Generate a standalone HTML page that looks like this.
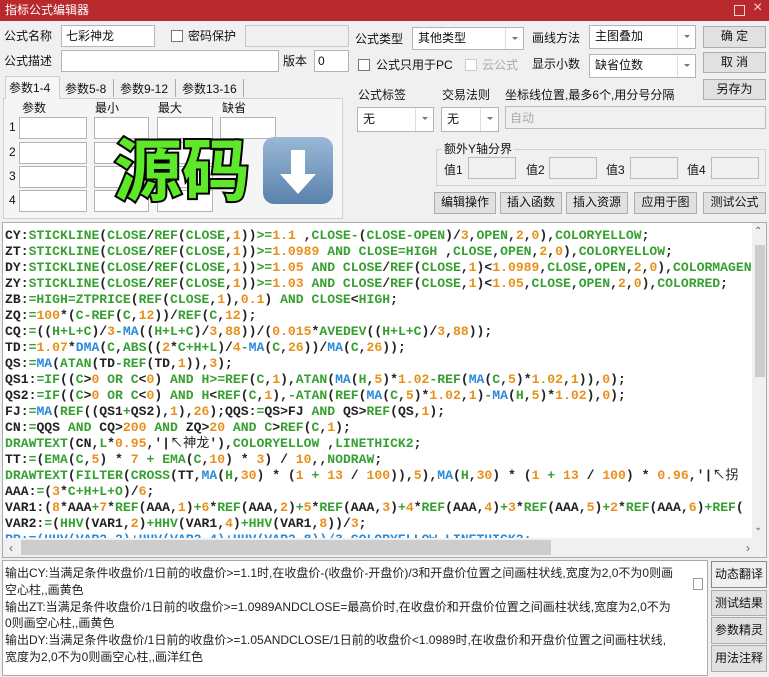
<!DOCTYPE html>
<html><head><meta charset="utf-8"><style>
*{box-sizing:border-box;margin:0;padding:0}
body{width:769px;height:677px;overflow:hidden;background:#f0f0f0;font-family:"Liberation Sans","Noto Sans CJK SC",sans-serif;font-size:12px;color:#111;position:relative}
.a{position:absolute}
.t{position:absolute;white-space:nowrap;line-height:14px}
.in{position:absolute;background:#fff;border:1px solid #b4b4b4}
.gr{position:absolute;background:#f0f0f0;border:1px solid #c8c8c8}
.btn{position:absolute;background:#e1e1e1;border:1px solid #adadad;text-align:center;line-height:19px;font-size:12px}
.sel{position:absolute;background:#fff;border:1px solid #b4b4b4;padding-left:5px;line-height:20px}
.sel:after{content:"";position:absolute;right:0;top:0;bottom:0;width:17px;border-left:1px solid #ddd}
.sel i{position:absolute;right:5px;top:9px;width:0;height:0;border-left:3px solid transparent;border-right:3px solid transparent;border-top:3px solid #777}
.cb{position:absolute;width:12px;height:12px;background:#fff;border:1px solid #555}
.code{position:absolute;left:4px;top:228px;font-family:"Liberation Mono","Noto Sans CJK SC",monospace;font-weight:bold;font-size:13.1px;line-height:16px;white-space:pre;color:#222}
.g{color:#36a030}.o{color:#e8901c}.b{color:#2a8ad8}
.bt{position:absolute;font-size:12px;line-height:16.8px;color:#222;left:5px;top:565px;white-space:nowrap}
</style></head><body>
<div class="a" style="left:0;top:0;width:769px;height:21px;background:#b8292e"></div>
<div class="t" style="left:5px;top:3px;color:#fff;font-size:12px">指标公式编辑器</div>
<div class="a" style="left:734px;top:5px;width:11px;height:11px;border:1px solid #f4d0d0"></div>
<div class="t" style="left:753px;top:1px;color:#f4d0d0;font-size:16px">×</div>

<div class="t" style="left:4px;top:29px">公式名称</div>
<div class="in" style="left:61px;top:25px;width:94px;height:22px"></div>
<div class="t" style="left:66px;top:29px">七彩神龙</div>
<div class="cb" style="left:171px;top:30px;border-color:#777"></div>
<div class="t" style="left:188px;top:29px">密码保护</div>
<div class="gr" style="left:245px;top:25px;width:104px;height:22px"></div>
<div class="t" style="left:4px;top:54px">公式描述</div>
<div class="in" style="left:61px;top:50px;width:218px;height:22px"></div>
<div class="t" style="left:283px;top:54px">版本</div>
<div class="in" style="left:314px;top:50px;width:35px;height:22px"></div>
<div class="t" style="left:318px;top:54px">0</div>

<div class="a" style="left:3px;top:98px;width:340px;height:121px;border:1px solid #d0d0d0;background:#f5f5f5"></div>
<div class="a" style="left:5px;top:76px;width:55px;height:23px;background:#f5f5f5;border:1px solid #d0d0d0;border-bottom:none"></div>
<div class="t" style="left:9px;top:81px">参数1-4</div>
<div class="t" style="left:65px;top:82px">参数5-8</div>
<div class="t" style="left:120px;top:82px">参数9-12</div>
<div class="t" style="left:182px;top:82px">参数13-16</div>
<div class="a" style="left:113px;top:79px;width:1px;height:18px;background:#aaa"></div>
<div class="a" style="left:175px;top:79px;width:1px;height:18px;background:#aaa"></div>
<div class="a" style="left:243px;top:79px;width:1px;height:18px;background:#aaa"></div>
<div class="t" style="left:22px;top:101px">参数</div>
<div class="t" style="left:95px;top:101px">最小</div>
<div class="t" style="left:158px;top:101px">最大</div>
<div class="t" style="left:222px;top:101px">缺省</div>
<div class="t" style="left:9px;top:120px">1</div><div class="t" style="left:9px;top:145px">2</div><div class="t" style="left:9px;top:169px">3</div><div class="t" style="left:9px;top:193px">4</div>
<div class="in" style="left:19px;top:117px;width:68px;height:22px"></div><div class="in" style="left:94px;top:117px;width:55px;height:22px"></div><div class="in" style="left:157px;top:117px;width:56px;height:22px"></div><div class="in" style="left:220px;top:117px;width:56px;height:22px"></div>
<div class="in" style="left:19px;top:142px;width:68px;height:22px"></div><div class="in" style="left:94px;top:142px;width:55px;height:22px"></div><div class="in" style="left:157px;top:142px;width:56px;height:22px"></div>
<div class="in" style="left:19px;top:166px;width:68px;height:22px"></div><div class="in" style="left:94px;top:166px;width:55px;height:22px"></div><div class="in" style="left:157px;top:166px;width:56px;height:22px"></div>
<div class="in" style="left:19px;top:190px;width:68px;height:22px"></div><div class="in" style="left:94px;top:190px;width:55px;height:22px"></div><div class="in" style="left:157px;top:190px;width:56px;height:22px"></div>

<div class="t" style="left:114px;top:126px;font-size:68px;line-height:80px;font-weight:bold;color:#5ee82a;-webkit-text-stroke:4px #000;paint-order:stroke fill;font-family:'Noto Sans CJK SC',sans-serif">源码</div>
<div class="a" style="left:263px;top:137px;width:70px;height:67px;border-radius:11px;background:linear-gradient(#9ab8d6,#5a82ad)"></div>
<svg class="a" style="left:263px;top:137px" width="70" height="67"><path d="M28 13h14v24h11L35 57 17 37h11z" fill="#fff"/></svg>

<div class="t" style="left:355px;top:32px">公式类型</div>
<div class="sel" style="left:412px;top:27px;width:112px;height:23px">其他类型<i></i></div>
<div class="t" style="left:532px;top:31px">画线方法</div>
<div class="sel" style="left:589px;top:25px;width:107px;height:24px">主图叠加<i></i></div>
<div class="btn" style="left:703px;top:26px;width:63px;height:22px">确 定</div>
<div class="btn" style="left:703px;top:52px;width:63px;height:21px">取 消</div>
<div class="btn" style="left:703px;top:79px;width:63px;height:21px">另存为</div>
<div class="cb" style="left:358px;top:59px;border-color:#777"></div>
<div class="t" style="left:376px;top:58px">公式只用于PC</div>
<div class="cb" style="left:465px;top:59px;border-color:#ccc"></div>
<div class="t" style="left:482px;top:58px;color:#aaa">云公式</div>
<div class="t" style="left:532px;top:57px">显示小数</div>
<div class="sel" style="left:589px;top:54px;width:107px;height:24px">缺省位数<i></i></div>
<div class="t" style="left:358px;top:88px">公式标签</div>
<div class="t" style="left:442px;top:88px">交易法则</div>
<div class="t" style="left:505px;top:88px">坐标线位置,最多6个,用分号分隔</div>
<div class="sel" style="left:357px;top:107px;width:77px;height:25px;line-height:23px">无<i></i></div>
<div class="sel" style="left:441px;top:107px;width:58px;height:25px;line-height:23px">无<i></i></div>
<div class="gr" style="left:505px;top:106px;width:261px;height:23px;border-color:#bbb"></div>
<div class="t" style="left:510px;top:111px;color:#aaa">自动</div>
<div class="a" style="left:436px;top:149px;width:330px;height:37px;border:1px solid #d0d0d0"></div>
<div class="t" style="left:442px;top:142px;background:#f0f0f0;padding:0 2px">额外Y轴分界</div>
<div class="t" style="left:444px;top:163px">值1</div><div class="gr" style="left:468px;top:157px;width:48px;height:22px;border-color:#bbb"></div>
<div class="t" style="left:526px;top:163px">值2</div><div class="gr" style="left:549px;top:157px;width:48px;height:22px;border-color:#bbb"></div>
<div class="t" style="left:606px;top:163px">值3</div><div class="gr" style="left:630px;top:157px;width:48px;height:22px;border-color:#bbb"></div>
<div class="t" style="left:687px;top:163px">值4</div><div class="gr" style="left:711px;top:157px;width:48px;height:22px;border-color:#bbb"></div>
<div class="btn" style="left:434px;top:192px;width:62px;height:22px">编辑操作</div>
<div class="btn" style="left:500px;top:192px;width:62px;height:22px">插入函数</div>
<div class="btn" style="left:566px;top:192px;width:62px;height:22px">插入资源</div>
<div class="btn" style="left:634px;top:192px;width:63px;height:22px">应用于图</div>
<div class="btn" style="left:703px;top:192px;width:63px;height:22px">测试公式</div>

<div class="a" style="left:2px;top:222px;width:765px;height:336px;background:#fff;border:1px solid #aaa;overflow:hidden">
<div class="code" style="left:2px;top:5px">CY:<span class="g">STICKLINE</span>(<span class="g">CLOSE</span>/<span class="g">REF</span>(<span class="g">CLOSE</span>,<span class="o">1</span>))<span class="g">&gt;=</span><span class="o">1.1</span> ,<span class="g">CLOSE-</span>(<span class="g">CLOSE-OPEN</span>)/<span class="o">3</span>,<span class="g">OPEN</span>,<span class="o">2</span>,<span class="o">0</span>),<span class="g">COLORYELLOW</span>;
ZT:<span class="g">STICKLINE</span>(<span class="g">CLOSE</span>/<span class="g">REF</span>(<span class="g">CLOSE</span>,<span class="o">1</span>))<span class="g">&gt;=</span><span class="o">1.0989</span> <span class="g">AND CLOSE=HIGH</span> ,<span class="g">CLOSE</span>,<span class="g">OPEN</span>,<span class="o">2</span>,<span class="o">0</span>),<span class="g">COLORYELLOW</span>;
DY:<span class="g">STICKLINE</span>(<span class="g">CLOSE</span>/<span class="g">REF</span>(<span class="g">CLOSE</span>,<span class="o">1</span>))<span class="g">&gt;=</span><span class="o">1.05</span> <span class="g">AND CLOSE</span>/<span class="g">REF</span>(<span class="g">CLOSE</span>,<span class="o">1</span>)&lt;<span class="o">1.0989</span>,<span class="g">CLOSE</span>,<span class="g">OPEN</span>,<span class="o">2</span>,<span class="o">0</span>),<span class="g">COLORMAGENTA</span>;
ZY:<span class="g">STICKLINE</span>(<span class="g">CLOSE</span>/<span class="g">REF</span>(<span class="g">CLOSE</span>,<span class="o">1</span>))<span class="g">&gt;=</span><span class="o">1.03</span> <span class="g">AND CLOSE</span>/<span class="g">REF</span>(<span class="g">CLOSE</span>,<span class="o">1</span>)&lt;<span class="o">1.05</span>,<span class="g">CLOSE</span>,<span class="g">OPEN</span>,<span class="o">2</span>,<span class="o">0</span>),<span class="g">COLORRED</span>;
ZB:<span class="g">=HIGH=ZTPRICE</span>(<span class="g">REF</span>(<span class="g">CLOSE</span>,<span class="o">1</span>),<span class="o">0.1</span>) <span class="g">AND CLOSE</span>&lt;<span class="g">HIGH</span>;
ZQ:<span class="g">=</span><span class="o">100</span>*(<span class="g">C-REF</span>(<span class="g">C</span>,<span class="o">12</span>))/<span class="g">REF</span>(<span class="g">C</span>,<span class="o">12</span>);
CQ:<span class="g">=</span>((<span class="g">H+L+C</span>)/<span class="o">3</span><span class="g">-</span><span class="b">MA</span>((<span class="g">H+L+C</span>)/<span class="o">3</span>,<span class="o">88</span>))/(<span class="o">0.015</span>*<span class="g">AVEDEV</span>((<span class="g">H+L+C</span>)/<span class="o">3</span>,<span class="o">88</span>));
TD:<span class="g">=</span><span class="o">1.07</span>*<span class="b">DMA</span>(<span class="g">C</span>,<span class="g">ABS</span>((<span class="o">2</span>*<span class="g">C+H+L</span>)/<span class="o">4</span><span class="g">-</span><span class="b">MA</span>(<span class="g">C</span>,<span class="o">26</span>))/<span class="b">MA</span>(<span class="g">C</span>,<span class="o">26</span>));
QS:<span class="g">=</span><span class="b">MA</span>(<span class="g">ATAN</span>(TD<span class="g">-REF</span>(TD,<span class="o">1</span>)),<span class="o">3</span>);
QS1:<span class="g">=IF</span>((<span class="g">C</span>&gt;<span class="o">0</span> <span class="g">OR C</span>&lt;<span class="o">0</span>) <span class="g">AND H&gt;=REF</span>(<span class="g">C</span>,<span class="o">1</span>),<span class="g">ATAN</span>(<span class="b">MA</span>(<span class="g">H</span>,<span class="o">5</span>)*<span class="o">1.02</span><span class="g">-REF</span>(<span class="b">MA</span>(<span class="g">C</span>,<span class="o">5</span>)*<span class="o">1.02</span>,<span class="o">1</span>)),<span class="o">0</span>);
QS2:<span class="g">=IF</span>((<span class="g">C</span>&gt;<span class="o">0</span> <span class="g">OR C</span>&lt;<span class="o">0</span>) <span class="g">AND H</span>&lt;<span class="g">REF</span>(<span class="g">C</span>,<span class="o">1</span>),<span class="g">-ATAN</span>(<span class="g">REF</span>(<span class="b">MA</span>(<span class="g">C</span>,<span class="o">5</span>)*<span class="o">1.02</span>,<span class="o">1</span>)<span class="g">-</span><span class="b">MA</span>(<span class="g">H</span>,<span class="o">5</span>)*<span class="o">1.02</span>),<span class="o">0</span>);
FJ:<span class="g">=</span><span class="b">MA</span>(<span class="g">REF</span>((QS1<span class="g">+</span>QS2),<span class="o">1</span>),<span class="o">26</span>);QQS:<span class="g">=</span>QS&gt;FJ <span class="g">AND</span> QS&gt;<span class="g">REF</span>(QS,<span class="o">1</span>);
CN:<span class="g">=</span>QQS <span class="g">AND</span> CQ&gt;<span class="o">200</span> <span class="g">AND</span> ZQ&gt;<span class="o">20</span> <span class="g">AND C</span>&gt;<span class="g">REF</span>(<span class="g">C</span>,<span class="o">1</span>);
<span class="g">DRAWTEXT</span>(CN,<span class="g">L</span>*<span class="o">0.95</span>,'|<span style="font-weight:normal">↖神龙</span>'),<span class="g">COLORYELLOW</span> ,<span class="g">LINETHICK2</span>;
TT:<span class="g">=</span>(<span class="g">EMA</span>(<span class="g">C</span>,<span class="o">5</span>) * <span class="o">7</span> <span class="g">+</span> <span class="g">EMA</span>(<span class="g">C</span>,<span class="o">10</span>) * <span class="o">3</span>) / <span class="o">10</span>,,<span class="g">NODRAW</span>;
<span class="g">DRAWTEXT</span>(<span class="g">FILTER</span>(<span class="g">CROSS</span>(TT,<span class="b">MA</span>(<span class="g">H</span>,<span class="o">30</span>) * (<span class="o">1</span> <span class="g">+</span> <span class="o">13</span> / <span class="o">100</span>)),<span class="o">5</span>),<span class="b">MA</span>(<span class="g">H</span>,<span class="o">30</span>) * (<span class="o">1</span> <span class="g">+</span> <span class="o">13</span> / <span class="o">100</span>) * <span class="o">0.96</span>,'|<span style="font-weight:normal">↖拐</span>
AAA:<span class="g">=</span>(<span class="o">3</span>*<span class="g">C+H+L+O</span>)/<span class="o">6</span>;
VAR1:(<span class="o">8</span>*AAA<span class="g">+</span><span class="o">7</span>*<span class="g">REF</span>(AAA,<span class="o">1</span>)<span class="g">+</span><span class="o">6</span>*<span class="g">REF</span>(AAA,<span class="o">2</span>)<span class="g">+</span><span class="o">5</span>*<span class="g">REF</span>(AAA,<span class="o">3</span>)<span class="g">+</span><span class="o">4</span>*<span class="g">REF</span>(AAA,<span class="o">4</span>)<span class="g">+</span><span class="o">3</span>*<span class="g">REF</span>(AAA,<span class="o">5</span>)<span class="g">+</span><span class="o">2</span>*<span class="g">REF</span>(AAA,<span class="o">6</span>)<span class="g">+REF</span>(
VAR2:<span class="g">=</span>(<span class="g">HHV</span>(VAR1,<span class="o">2</span>)<span class="g">+HHV</span>(VAR1,<span class="o">4</span>)<span class="g">+HHV</span>(VAR1,<span class="o">8</span>))/<span class="o">3</span>;
<span style="color:#2a8ad8">RR:=(HHV(VAR2,2)+HHV(VAR2,4)+HHV(VAR2,8))/3,COLORYELLOW,LINETHICK2;</span></div>
<div class="a" style="left:749px;top:0;width:15px;height:315px;background:#f0f0f0"></div>
<div class="a" style="left:752px;top:22px;width:10px;height:132px;background:#cdcdcd"></div>
<div class="t" style="left:751px;top:2px;color:#666;font-size:10px">⌃</div>
<div class="t" style="left:751px;top:298px;color:#666;font-size:10px">⌄</div>
<div class="a" style="left:0;top:315px;width:764px;height:19px;background:#f0f0f0"></div>
<div class="a" style="left:18px;top:317px;width:530px;height:15px;background:#cdcdcd"></div>
<div class="t" style="left:6px;top:318px;color:#666">‹</div>
<div class="t" style="left:743px;top:318px;color:#666">›</div>
</div>

<div class="a" style="left:2px;top:560px;width:706px;height:116px;background:#fff;border:1px solid #aaa"></div>
<div class="bt">输出CY:当满足条件收盘价/1日前的收盘价&gt;=1.1时,在收盘价-(收盘价-开盘价)/3和开盘价位置之间画柱状线,宽度为2,0不为0则画<br>空心柱,,画黄色<br>输出ZT:当满足条件收盘价/1日前的收盘价&gt;=1.0989ANDCLOSE=最高价时,在收盘价和开盘价位置之间画柱状线,宽度为2,0不为<br>0则画空心柱,,画黄色<br>输出DY:当满足条件收盘价/1日前的收盘价&gt;=1.05ANDCLOSE/1日前的收盘价&lt;1.0989时,在收盘价和开盘价位置之间画柱状线,<br>宽度为2,0不为0则画空心柱,,画洋红色</div>
<div class="a" style="left:693px;top:578px;width:10px;height:12px;border:1px solid #999;background:#fff"></div>
<div class="btn" style="left:711px;top:561px;width:56px;height:27px;line-height:25px;background:#f0f0f0;border-color:#888">动态翻译</div>
<div class="btn" style="left:711px;top:590px;width:56px;height:26px;line-height:24px">测试结果</div>
<div class="btn" style="left:711px;top:617px;width:56px;height:27px;line-height:25px">参数精灵</div>
<div class="btn" style="left:711px;top:645px;width:56px;height:27px;line-height:25px">用法注释</div>
</body></html>
